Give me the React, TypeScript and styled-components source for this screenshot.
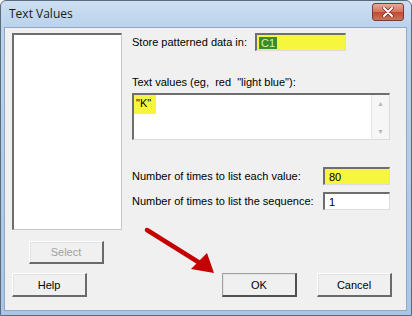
import styled, { createGlobalStyle } from "styled-components";

const GlobalStyle = createGlobalStyle`
  html, body { margin: 0; padding: 0; background: #ffffff; }
  body { font-family: "Liberation Sans", Arial, sans-serif; font-size: 11px; color: #000; }
`;

const Window = styled.div`
  position: relative;
  width: 412px;
  height: 316px;
  box-sizing: border-box;
  display: flex;
  flex-direction: column;
  border: 1px solid #5a6b7e;
  border-radius: 6px 6px 0 0;
  background: linear-gradient(#cddff2, #bad2eb 26px, #a9c6e6);
  padding: 0 4px 4px 3px;
`;

const TitleBar = styled.div`
  height: 26px;
  display: flex;
  align-items: center;
  justify-content: space-between;
  padding: 0 3px 0 5px;
`;

const Title = styled.span`
  font-family: "Open Sans", "Liberation Sans", sans-serif;
  font-size: 12px;
  color: #1a1a1a;
  margin-top: -1px;
`;

const CloseButton = styled.div`
  width: 30px;
  height: 16px;
  margin-top: -4px;
  border: 1px solid #7a3a30;
  border-radius: 3px;
  background: linear-gradient(#e9a99a, #d2735e 50%, #c04a30 51%, #d0705a);
  display: flex;
  align-items: center;
  justify-content: center;
`;

const Client = styled.div`
  flex: 1;
  background: #f0f0f0;
  border: 1px solid #8ea9c6;
  display: grid;
  grid-template-columns: 110px 1fr;
  column-gap: 10px;
  align-content: start;
  padding: 5px 14px 0 7px;
`;

const LeftColumn = styled.div`
  display: flex;
  flex-direction: column;
`;

const ListBox = styled.div`
  height: 197px;
  box-sizing: border-box;
  background: #fff;
  border-style: solid;
  border-width: 2px 1px 1px 2px;
  border-color: #6e6e6e #c8c8c8 #c8c8c8 #6e6e6e;
`;

const Button = styled.div<{ $disabled?: boolean; $default?: boolean }>`
  width: 75px;
  height: 24px;
  box-sizing: border-box;
  display: flex;
  align-items: center;
  justify-content: center;
  background: #f0f0f0;
  border-style: solid;
  border-width: 1px 2px 2px 1px;
  border-color: ${({ $default }) =>
    $default ? "#a0a0a0 #505050 #505050 #a0a0a0" : "#ffffff #6a6a6a #6a6a6a #ffffff"};
  box-shadow: inset 1px 1px 0 #e3e3e3;
  color: ${({ $disabled }) => ($disabled ? "#a0a0a0" : "#000")};
  font-size: 11px;
`;

const SelectButton = styled(Button)`
  margin: 11px 0 0 17px;
  height: 23px;
`;

const RightColumn = styled.div`
  display: flex;
  flex-direction: column;
`;

const FieldRow = styled.div<{ $gap: number }>`
  display: flex;
  align-items: center;
  height: 18px;
  margin-top: ${({ $gap }) => $gap}px;
`;

const Label = styled.span<{ $width?: number }>`
  width: ${({ $width }) => ($width ? `${$width}px` : "auto")};
  flex: none;
  white-space: nowrap;
`;

const Input = styled.div<{ $width: number; $highlight?: boolean }>`
  width: ${({ $width }) => $width}px;
  height: 18px;
  box-sizing: border-box;
  display: flex;
  align-items: center;
  padding-left: 4px;
  background: ${({ $highlight }) => ($highlight ? "#f6f63e" : "#ffffff")};
  border-style: solid;
  border-width: 2px 1px 1px 2px;
  border-color: #6e6e6e #dcdcdc #dcdcdc #6e6e6e;
`;

const Selected = styled.span`
  background: #3b8a2c;
  color: #d9f3a8;
  padding: 0 2px;
  margin-left: -2px;
`;

const AreaLabel = styled.div`
  margin-top: 24px;
  height: 14px;
  line-height: 14px;
  white-space: nowrap;
`;

const TextArea = styled.div`
  margin-top: 4px;
  width: 258px;
  height: 47px;
  box-sizing: border-box;
  background: #fff;
  border-style: solid;
  border-width: 2px 1px 1px 2px;
  border-color: #6e6e6e #dcdcdc #dcdcdc #6e6e6e;
  display: flex;
`;

const AreaText = styled.div`
  flex: 1;
`;

const Marker = styled.span`
  display: inline-block;
  background: #f6f63e;
  padding: 2px 5px 5px 2px;
`;

const ScrollBar = styled.div`
  width: 17px;
  background: #f6f6f6;
  border-left: 1px solid #e6e6e6;
  display: flex;
  flex-direction: column;
  justify-content: space-between;
  align-items: center;
  padding: 5px 0 4px;
  color: #b8b8b8;
  font-size: 7px;
  line-height: 7px;
`;

const BottomRow = styled.div`
  grid-column: 1 / -1;
  display: flex;
  margin-top: 9px;
`;

const Spacer = styled.div`
  flex: 1;
`;

const OkButton = styled(Button)`
  margin-right: 20px;
`;

const ArrowOverlay = styled.svg`
  position: absolute;
  left: 0;
  top: 0;
  pointer-events: none;
`;

export default function App() {
  return (
    <>
      <GlobalStyle />
      <Window>
        <TitleBar>
          <Title>Text Values</Title>
          <CloseButton>
            <svg width="12" height="10" viewBox="0 0 12 10">
              <path d="M2 1 L10 9 M10 1 L2 9" stroke="#6a2a20" strokeWidth="3.4" strokeLinecap="round" />
              <path d="M2 1 L10 9 M10 1 L2 9" stroke="#ffffff" strokeWidth="2" strokeLinecap="round" />
            </svg>
          </CloseButton>
        </TitleBar>
        <Client>
          <LeftColumn>
            <ListBox />
            <SelectButton $disabled>Select</SelectButton>
          </LeftColumn>
          <RightColumn>
            <FieldRow $gap={0}>
              <Label $width={123}>Store patterned data in:</Label>
              <Input $width={91} $highlight>
                <Selected>C1</Selected>
              </Input>
            </FieldRow>
            <AreaLabel>Text values (eg,&nbsp; red&nbsp; "light blue"):</AreaLabel>
            <TextArea>
              <AreaText>
                <Marker>"K"</Marker>
              </AreaText>
              <ScrollBar>
                <span>▲</span>
                <span>▼</span>
              </ScrollBar>
            </TextArea>
            <FieldRow $gap={27}>
              <Label $width={191}>Number of times to list each value:</Label>
              <Input $width={67} $highlight>80</Input>
            </FieldRow>
            <FieldRow $gap={7}>
              <Label $width={191}>Number of times to list the sequence:</Label>
              <Input $width={67}>1</Input>
            </FieldRow>
          </RightColumn>
          <BottomRow>
            <Button>Help</Button>
            <Spacer />
            <OkButton $default>OK</OkButton>
            <Button>Cancel</Button>
          </BottomRow>
        </Client>
        <ArrowOverlay width="412" height="316" viewBox="0 0 412 316">
          <line x1="146" y1="229" x2="202" y2="264" stroke="#c40000" strokeWidth="4.5" strokeLinecap="round" />
          <polygon points="213,272 190,268 206,252" fill="#c40000" />
        </ArrowOverlay>
      </Window>
    </>
  );
}
